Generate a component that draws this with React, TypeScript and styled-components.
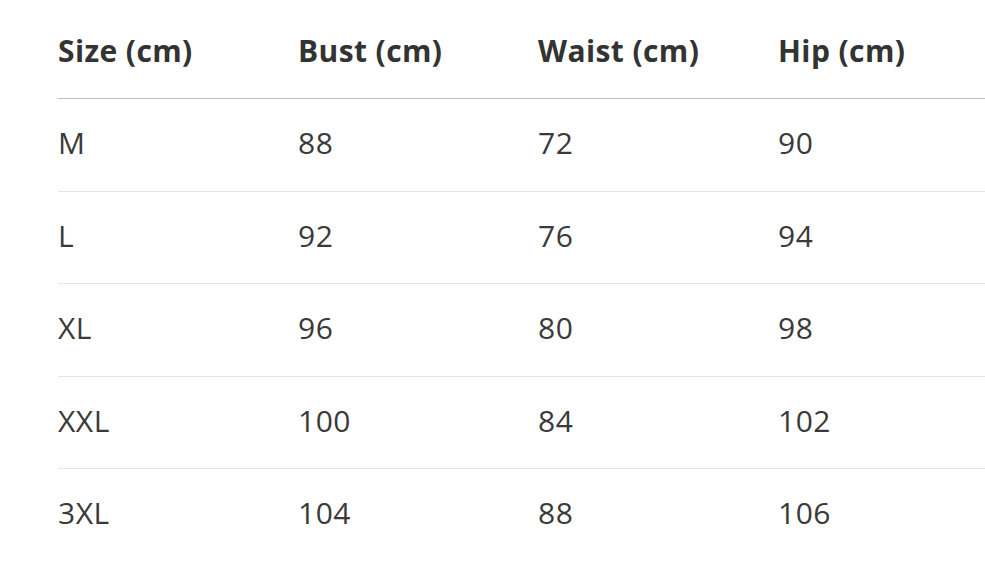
import React from "react";
import styled, { createGlobalStyle } from "styled-components";

const GlobalStyle = createGlobalStyle`
  html, body {
    margin: 0;
    padding: 0;
    background: #fff;
    overflow: hidden;
  }
  body {
    font-family: "Open Sans", "Noto Sans", sans-serif;
    color: #333;
  }
`;

const Wrapper = styled.section`
  padding: 6px 0 0 58px;
`;

const Table = styled.div`
  width: 960px;
  display: flex;
  flex-direction: column;
`;

const Row = styled.div<{ $head?: boolean }>`
  display: grid;
  grid-template-columns: repeat(4, 240px);
  align-items: center;
  height: ${(p) => (p.$head ? "92px" : "91.5px")};
  border-bottom: 1px solid ${(p) => (p.$head ? "#bdbdbd" : "#e6e6e6")};
  &:last-child {
    border-bottom: none;
  }
`;

const Cell = styled.div<{ $head?: boolean }>`
  font-size: 30px;
  line-height: 36px;
  margin-top: ${(p) => (p.$head ? "-2px" : "-3px")};
  font-weight: ${(p) => (p.$head ? 700 : 400)};
  color: ${(p) => (p.$head ? "#333" : "#3a3a3a")};
  letter-spacing: ${(p) => (p.$head ? "0.4px" : "0.5px")};
`;

const headers = ["Size (cm)", "Bust (cm)", "Waist (cm)", "Hip (cm)"];

const rows = [
  ["M", "88", "72", "90"],
  ["L", "92", "76", "94"],
  ["XL", "96", "80", "98"],
  ["XXL", "100", "84", "102"],
  ["3XL", "104", "88", "106"],
];

const App = () => {
  return (
    <>
      <GlobalStyle />
      <Wrapper>
        <Table>
          <Row $head>
            {headers.map((h) => (
              <Cell $head key={h}>
                {h}
              </Cell>
            ))}
          </Row>
          {rows.map((r) => (
            <Row key={r[0]}>
              {r.map((c, i) => (
                <Cell key={i}>{c}</Cell>
              ))}
            </Row>
          ))}
        </Table>
      </Wrapper>
    </>
  );
};

export default App;
